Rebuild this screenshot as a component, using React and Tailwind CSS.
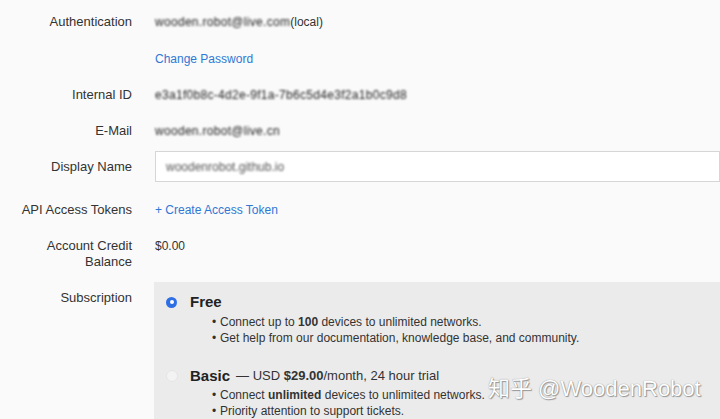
import React from "react";

const font = { fontFamily: '"Liberation Sans", Arial, "Noto Sans CJK SC", sans-serif' };

function Row({ label, className = "", children }) {
  return (
    <div className={`flex ${className}`}>
      <div className="w-[132px] shrink-0 text-right text-[13px] leading-[20px] text-[#333]">{label}</div>
      <div className="ml-[23px] flex-1 text-[12px] leading-[20px] text-[#333]">{children}</div>
    </div>
  );
}

function Blurred({ children }) {
  return <span className="inline-block blur-[0.8px] tracking-[0.3px] text-[#222]">{children}</span>;
}

const bullet = "relative before:absolute before:left-[-8px] before:content-['•']";

export default function App() {
  return (
    <div className="relative h-[419px] w-[720px] overflow-hidden bg-[#fafafa] pt-[12px]" style={font}>
      <Row label="Authentication">
        <Blurred>wooden.robot@live.com</Blurred>
        <span>(local)</span>
      </Row>
      <Row label="" className="mt-[17px]">
        <a className="text-[#2f78d6]">Change Password</a>
      </Row>
      <Row label="Internal ID" className="mt-[16px]">
        <Blurred>e3a1f0b8c-4d2e-9f1a-7b6c5d4e3f2a1b0c9d8</Blurred>
      </Row>
      <Row label="E-Mail" className="mt-[16px]">
        <Blurred>wooden.robot@live.cn</Blurred>
      </Row>
      <div className="mt-[10px] flex items-center">
        <div className="w-[132px] shrink-0 text-right text-[13px] leading-[20px] text-[#333]">Display Name</div>
        <div className="ml-[23px] flex h-[31px] flex-1 items-center border border-[#d6d6d6] bg-white pl-[10px] text-[12px] text-[#555]">
          <span className="inline-block blur-[0.8px]">woodenrobot.github.io</span>
        </div>
      </div>
      <Row label="API Access Tokens" className="mt-[18px]">
        <a className="text-[#2f78d6]">+ Create Access Token</a>
      </Row>
      <div className="mt-[18px] flex">
        <div className="w-[132px] shrink-0 text-right text-[13px] leading-[16px] text-[#333]">
          Account Credit
          <br />
          Balance
        </div>
        <div className="ml-[23px] text-[12px] leading-[16px] text-[#333]">$0.00</div>
      </div>
      <div className="mt-[12px] flex">
        <div className="w-[132px] shrink-0 pt-[6px] text-right text-[13px] leading-[20px] text-[#333]">Subscription</div>
        <div className="ml-[22px] flex-1 bg-[#ebebeb] pb-[20px] pt-[10px] text-[#333]">
          <div className="flex items-center">
            <span className="ml-[12px] flex h-[11px] w-[11px] items-center justify-center rounded-full bg-[#2f6fe6]">
              <span className="h-[4px] w-[4px] rounded-full bg-white" />
            </span>
            <span className="ml-[13px] text-[15px] font-bold leading-[20px] text-[#222]">Free</span>
          </div>
          <ul className="mt-[2px] pl-[66px] text-[12px] leading-[16px]">
            <li className={bullet}>
              Connect up to <b className="font-semibold">100</b> devices to unlimited networks.
            </li>
            <li className={bullet}>Get help from our documentation, knowledge base, and community.</li>
          </ul>
          <div className="mt-[20px] flex items-center">
            <span className="ml-[12px] h-[12px] w-[12px] rounded-full border border-[#e6e6e6] bg-[#f3f3f3]" />
            <span className="ml-[12px] text-[15px] font-bold leading-[20px] text-[#222]">Basic</span>
            <span className="ml-[6px] text-[13px] leading-[20px]">
              — USD <b className="font-semibold">$29.00</b>/month, 24 hour trial
            </span>
          </div>
          <ul className="mt-[1px] pl-[66px] text-[12px] leading-[16px]">
            <li className={bullet}>
              Connect <b className="font-semibold">unlimited</b> devices to unlimited networks.
            </li>
            <li className={bullet}>Priority attention to support tickets.</li>
          </ul>
        </div>
      </div>
      <div
        className="absolute left-[488px] top-[376px] text-[22px] leading-[26px] text-white"
        style={{ textShadow: "0 0 1px #777, 1px 1px 1px #999" }}
      >
        知乎 @WoodenRobot
      </div>
    </div>
  );
}
